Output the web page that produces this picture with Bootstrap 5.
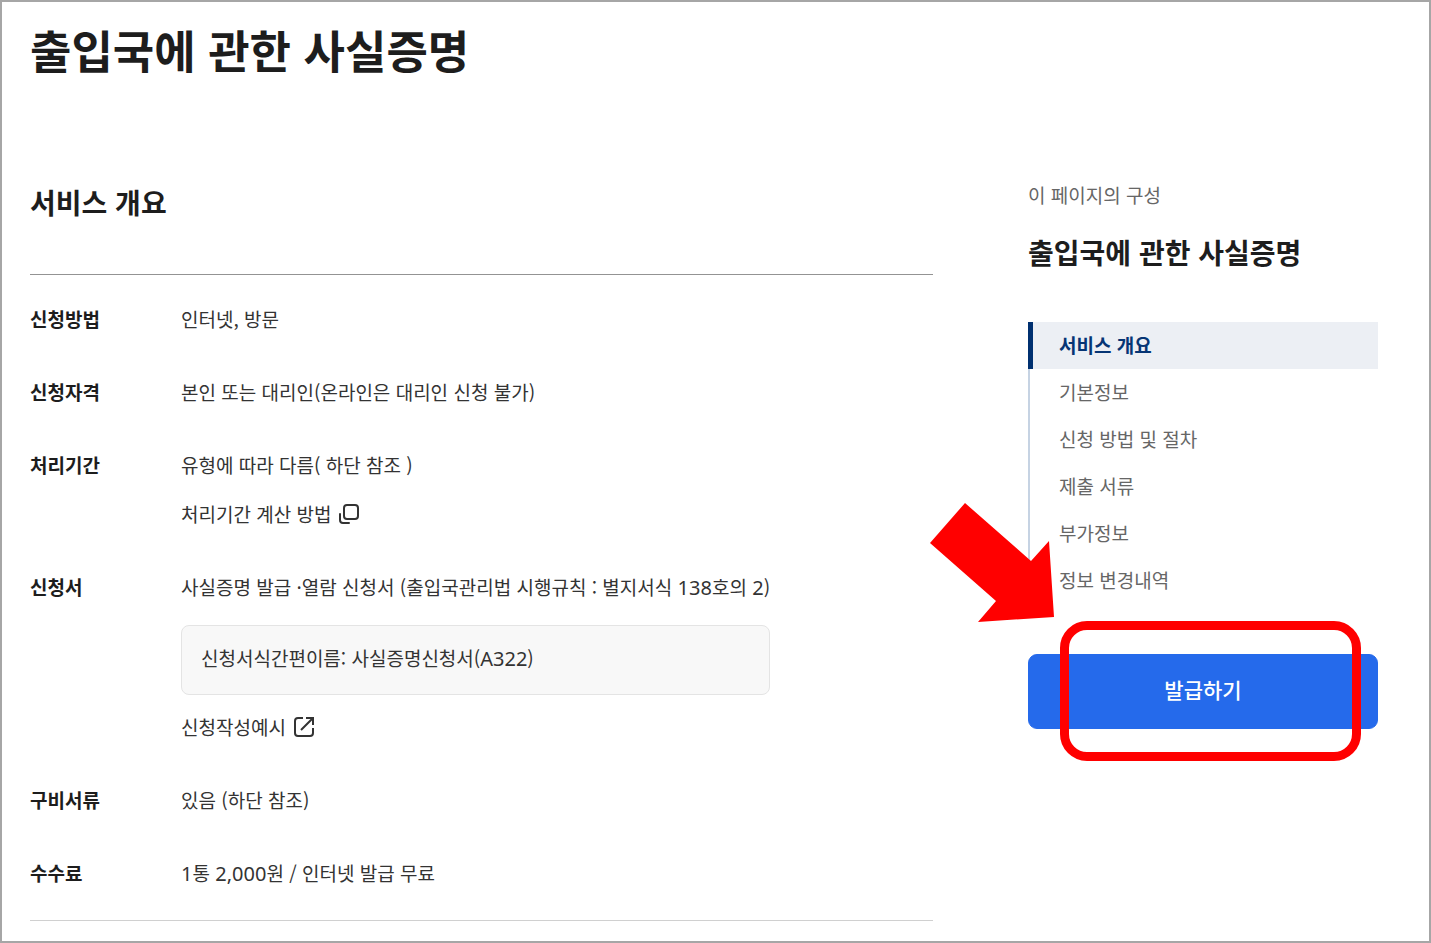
<!DOCTYPE html>
<html lang="ko">
<head>
<meta charset="utf-8">
<meta name="viewport" content="width=device-width, initial-scale=1">
<title>출입국에 관한 사실증명</title>
<link href="https://cdn.jsdelivr.net/npm/bootstrap@5.3.0/dist/css/bootstrap.min.css" rel="stylesheet">
<style>
  body { font-family: "Noto Sans CJK KR", sans-serif; font-size: 19px; line-height: 28px; color: #333; }
  .page-frame { border: 2px solid #a6a6a6; padding: 16px 51px 20px 28px; }
  .page-title { font-size: 45px; line-height: 64px; font-weight: 700; color: #1d1d1d; margin-bottom: 84px; }
  .columns { column-gap: 95px; row-gap: 48px; }
  .overview { flex: 1 1 600px; }
  .section-title { font-size: 28px; line-height: 40px; font-weight: 700; color: #1d1d1d; }
  .overview .section-title { margin: 16px 0 52px; }
  .facts { border-top: 1px solid #939393; border-bottom: 1px solid #d0d0d0; padding: 30px 0 33px; row-gap: 45px; }
  .facts dt { flex: 0 0 151px; font-weight: 700; color: #1d1d1d; }
  .facts a { color: inherit; }
  .latin { font-family: "Noto Sans", "Noto Sans CJK KR", sans-serif; font-size: 20px; line-height: 1; }
  .stack { row-gap: 21px; }
  .form-info { width: fit-content; }
  .form-name { margin: 24px 0 18px; padding: 17px 19px 21px; background: #f8f8f8; border: 1px solid #e4e4e4; border-radius: 8px; line-height: 30px; }
  .toc { flex: 0 0 350px; padding-top: 15px; }
  .toc-label { color: #666; line-height: 28px; margin-bottom: 23px; }
  .toc .section-title { margin-bottom: 50px; }
  .toc-nav { border-left: 2px solid #c6d3e3; margin-bottom: 50px; }
  .toc-nav .nav-link { color: #666; line-height: 27px; padding: 9px 0 11px 29px; }
  .toc-nav .nav-link.active { color: #063574; font-weight: 700; background: #eceff4; border-left: 5px solid #003070; margin-left: -2px; padding-left: 26px; }
  .issue-btn { --bs-btn-bg: #256aeb; --bs-btn-color: #fff; --bs-btn-border-color: #256aeb; --bs-btn-hover-bg: #1c57c7; --bs-btn-hover-color: #fff; font-size: 21px; line-height: 31px; padding: 19px 21px 23px; border-radius: 9px; font-weight: 500; }
  .callout-ring { inset: -33px 17px -32px 32px; border: 9px solid #f00; border-radius: 27px; pointer-events: none; }
  .callout-arrow { left: -98px; top: -151px; pointer-events: none; }
</style>
</head>
<body>
<div class="page-frame min-vh-100">
  <h1 class="page-title">출입국에 관한 사실증명</h1>
  <div class="columns d-flex flex-wrap align-items-start">
    <main class="overview" id="overview">
      <h2 class="section-title">서비스 개요</h2>
      <dl class="facts d-flex flex-column mb-0">
        <div class="d-flex"><dt>신청방법</dt><dd class="mb-0">인터넷, 방문</dd></div>
        <div class="d-flex"><dt>신청자격</dt><dd class="mb-0">본인 또는 대리인(온라인은 대리인 신청 불가)</dd></div>
        <div class="d-flex"><dt>처리기간</dt>
          <dd class="stack d-flex flex-column mb-0">
            <span>유형에 따라 다름( 하단 참조 )</span>
            <a href="#period" class="d-flex align-items-center text-decoration-none">처리기간 계산 방법
              <svg class="ms-2" width="20" height="20" viewBox="0 0 20 20" fill="none" stroke="#333" stroke-width="2" stroke-linecap="round" aria-hidden="true"><rect x="5" y="1" width="14" height="14" rx="3"/><path d="M1 10v6a3 3 0 0 0 3 3h6"/></svg>
            </a>
          </dd>
        </div>
        <div class="d-flex"><dt>신청서</dt>
          <dd class="form-info mb-0">
            <div>사실증명 발급 ·열람 신청서 (출입국관리법 시행규칙 : 별지서식 <span class="latin">138</span>호의 <span class="latin">2</span>)</div>
            <div class="form-name">신청서식간편이름: 사실증명신청서(<span class="latin">A322</span>)</div>
            <a href="#sample" class="d-flex align-items-center text-decoration-none">신청작성예시
              <svg class="ms-2" width="20" height="20" viewBox="0 0 20 20" fill="none" stroke="#333" stroke-width="2" aria-hidden="true"><path d="M9 1H4a3 3 0 0 0-3 3v12a3 3 0 0 0 3 3h12a3 3 0 0 0 3-3v-5M12 1h7v7M18.500 1.500L7 13"/></svg>
            </a>
          </dd>
        </div>
        <div class="d-flex"><dt>구비서류</dt><dd class="mb-0">있음 (하단 참조)</dd></div>
        <div class="d-flex"><dt>수수료</dt><dd class="mb-0"><span class="latin">1</span>통 <span class="latin">2,000</span>원 / 인터넷 발급 무료</dd></div>
      </dl>
    </main>
    <aside class="toc">
      <p class="toc-label">이 페이지의 구성</p>
      <h2 class="section-title">출입국에 관한 사실증명</h2>
      <nav class="toc-nav nav flex-column" aria-label="이 페이지의 구성">
        <a class="nav-link active" href="#overview">서비스 개요</a>
        <a class="nav-link" href="#basic">기본정보</a>
        <a class="nav-link" href="#steps">신청 방법 및 절차</a>
        <a class="nav-link" href="#documents">제출 서류</a>
        <a class="nav-link" href="#extra">부가정보</a>
        <a class="nav-link" href="#history">정보 변경내역</a>
      </nav>
      <div class="position-relative">
        <button type="button" class="issue-btn btn w-100">발급하기</button>
        <div class="callout-ring position-absolute"></div>
        <svg class="callout-arrow position-absolute" width="125" height="119" viewBox="0 0 125 119" aria-hidden="true"><path fill="#f00" d="M35 0L101 58 119 38 124 114 48 119 66 98 0 40z"/></svg>
      </div>
    </aside>
  </div>
</div>
<script src="https://cdn.jsdelivr.net/npm/bootstrap@5.3.0/dist/js/bootstrap.bundle.min.js"></script>
</body>
</html>
